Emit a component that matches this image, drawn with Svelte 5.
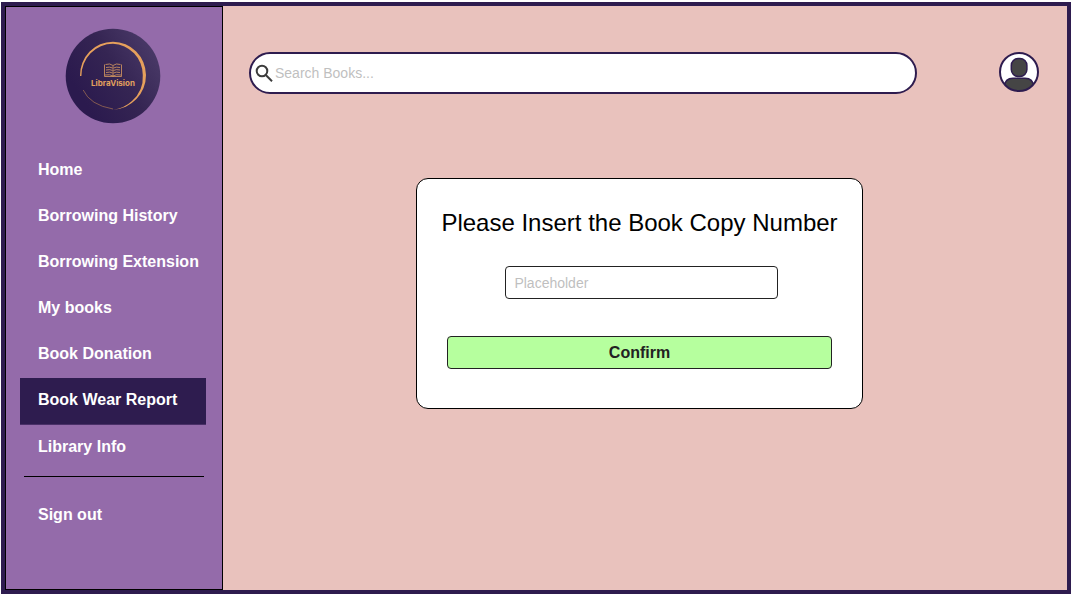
<script>
  const items = [
    'Home',
    'Borrowing History',
    'Borrowing Extension',
    'My books',
    'Book Donation',
    'Book Wear Report',
    'Library Info'
  ];
  let active = $state('Book Wear Report');
  let query = $state('');
  let copyNumber = $state('');
</script>

<div class="frame">
  <aside class="sidebar">
    <svg class="logo" viewBox="0 0 96 96" role="img" aria-label="LibraVision">
      <defs>
        <linearGradient id="disc" x1="0.15" y1="0.7" x2="0.95" y2="0.2">
          <stop offset="0" stop-color="#2b1a4e" />
          <stop offset="0.5" stop-color="#352553" />
          <stop offset="1" stop-color="#4a3a68" />
        </linearGradient>
      </defs>
      <circle cx="48" cy="48" r="47.3" fill="url(#disc)" />
      <path
        fill="#e6a05c"
        d="M15 48A33 33.500 0 0 1 48 13.700A33.500 33.800 0 0 1 81 47A34 34.500 0 0 1 48 81.600Q59 80.500 67 73A31.500 32 0 0 0 77.800 47A31 31.500 0 0 0 48 15.800A31.500 32 0 0 0 16.400 48Z"
      />
      <path d="M18.200 62Q25 77 48 81" fill="none" stroke="#a97452" stroke-width="0.7" />
      <g fill="none" stroke="#d99a61" stroke-width="0.8">
        <path d="M39.500 36.500V48.500H56.500V36.500M48 38V48.500" />
        <path d="M40.500 36.500Q45 35 48 37.500Q51 35 55.500 36.500M41 39.500Q45 38.500 47.500 40M48.500 40Q51 38.500 55 39.500M41 42Q45 41 47.500 42.500M48.500 42.500Q51 41 55 42M41 44.500Q45 43.500 47.500 45M48.500 45Q51 43.500 55 44.500M40 47Q45 46 48 48Q51 46 56 47" />
      </g>
      <text class="brand" x="48" y="58" text-anchor="middle">LibraVision</text>
    </svg>

    <nav>
      {#each items as item}
        <a
          href="#{item.toLowerCase().replaceAll(' ', '-')}"
          class:active={item === active}
          aria-current={item === active ? 'page' : undefined}
          onclick={() => (active = item)}>{item}</a>
      {/each}
    </nav>
    <hr />
    <button class="signout" type="button">Sign out</button>
  </aside>

  <main>
    <header>
      <label class="search">
        <svg viewBox="0 0 18 18" aria-hidden="true">
          <circle cx="7" cy="7" r="5.300" />
          <path d="M10.800 11L17 17.200" />
        </svg>
        <input type="text" aria-label="Search books" placeholder="Search Books..." bind:value={query} />
      </label>
      <button class="avatar" type="button" aria-label="Profile">
        <svg viewBox="0 0 40 40" aria-hidden="true">
          <defs>
            <clipPath id="ring"><circle cx="20" cy="20" r="19" /></clipPath>
          </defs>
          <circle cx="20" cy="20" r="19" fill="#fff" />
          <g clip-path="url(#ring)" fill="#454545" stroke="#2e1c4f" stroke-width="1.500">
            <rect x="12.300" y="6.500" width="15.600" height="18" rx="7" />
            <path d="M5 40V35Q6 26.200 14 26.200H26Q34 26.200 35 35V40Z" />
          </g>
          <circle cx="20" cy="20" r="19" fill="none" stroke="#2e1c4f" stroke-width="2" />
        </svg>
      </button>
    </header>

    <form class="card" onsubmit={(e) => e.preventDefault()}>
      <label class="title" for="copy">Please Insert the Book Copy Number</label>
      <input id="copy" type="text" placeholder="Placeholder" bind:value={copyNumber} />
      <button class="confirm" type="submit">Confirm</button>
    </form>
  </main>
</div>

<style>
  :global(body) {
    background: #fff;
  }
  :global(#app) {
    padding: 2px 0 1px 1px;
  }
  .frame,
  .frame * {
    box-sizing: border-box;
  }
  .frame {
    display: grid;
    grid-template-columns: 218px 1fr;
    min-height: calc(100vh - 3px);
    border: 4px solid #2e1c4f;
    background: #e9c2bd;
    font-family: 'Liberation Sans', Arial, sans-serif;
  }
  .sidebar {
    display: flex;
    flex-direction: column;
    padding: 21px 16px 21px 14px;
    border: 1px solid #000;
    background: #946baa;
  }
  .logo {
    align-self: center;
    width: 96px;
    height: 96px;
    margin-bottom: 24px;
  }
  .brand {
    fill: #e2a15e;
    font: 700 8px Inter, sans-serif;
  }
  nav {
    display: flex;
    flex-direction: column;
  }
  nav a,
  .signout {
    padding: 13px 0 15px 18px;
    color: #fff;
    font: 700 16px/18px 'Liberation Sans', Arial, sans-serif;
    text-align: left;
    text-decoration: none;
    white-space: nowrap;
  }
  nav a.active {
    border-bottom: 1px solid #4a3068;
    background: #2e1c4f;
  }
  hr {
    align-self: stretch;
    margin: 5px 2px 16px 4px;
    border: 0;
    border-top: 1px solid #000;
  }
  .signout {
    border: 0;
    background: none;
    cursor: pointer;
  }
  main {
    display: flex;
    flex-direction: column;
    min-width: 0;
  }
  header {
    display: flex;
    align-items: flex-start;
    gap: 82px;
    padding: 46px 28px 0 26px;
  }
  .search {
    display: flex;
    flex: 1;
    align-items: center;
    gap: 2px;
    height: 42px;
    padding: 0 20px 0 4px;
    border: 2px solid #2e1c4f;
    border-radius: 21px;
    background: #fff;
  }
  .search svg {
    flex: none;
    width: 18px;
    height: 18px;
    fill: none;
    stroke: #3c3c3c;
    stroke-width: 2;
  }
  .search input {
    flex: 1;
    min-width: 0;
    padding: 0;
    border: 0;
    outline: 0;
    background: none;
    font: 14px/18px 'Liberation Sans', Arial, sans-serif;
  }
  input::placeholder {
    color: #bfbfbf;
    opacity: 1;
  }
  .avatar {
    flex: none;
    width: 40px;
    height: 40px;
    padding: 0;
    border: 0;
    background: none;
    cursor: pointer;
  }
  .avatar svg {
    display: block;
  }
  .card {
    display: flex;
    flex-direction: column;
    align-self: center;
    margin: 84px 11px 24px 0;
    padding: 30px 24px 39px;
    border: 1px solid #000;
    border-radius: 12px;
    background: #fff;
  }
  .title {
    margin-bottom: 29px;
    color: #000;
    font-size: 24px;
    line-height: 28px;
  }
  .card input {
    height: 33px;
    margin: 0 60px 37px 64px;
    padding: 0 8px;
    border: 1px solid #222;
    border-radius: 4px;
    background: #fff;
    font: 14px/18px 'Liberation Sans', Arial, sans-serif;
  }
  .confirm {
    height: 33px;
    margin: 0 6px;
    border: 1px solid #222;
    border-radius: 4px;
    background: #b6ff9e;
    color: #222;
    font: 700 16px/18px 'Liberation Sans', Arial, sans-serif;
    cursor: pointer;
  }
</style>
